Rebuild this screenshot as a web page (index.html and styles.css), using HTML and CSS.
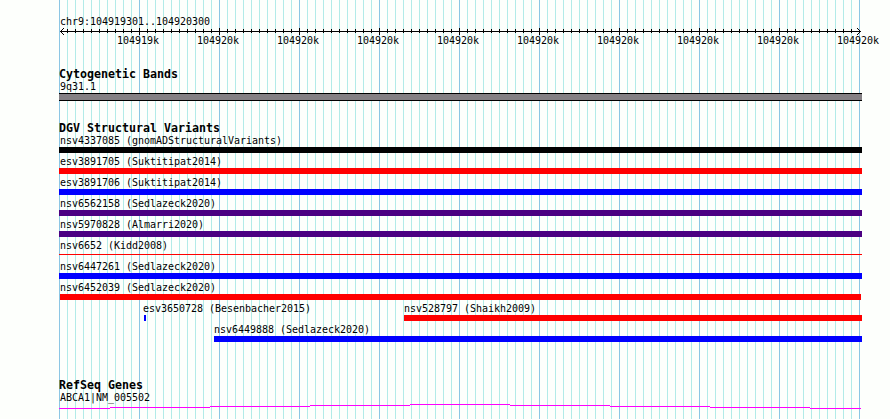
FILE: index.html
```
<!DOCTYPE html>
<html lang="en">
<head>
  <meta charset="UTF-8">
  <title>chr9:104919301..104920300</title>
  <link rel="stylesheet" href="styles.css">
</head>
<body>
  <div class="panel">
    <header class="ruler">
      <div class="region">chr9:104919301..104920300</div>
      <svg class="scale" width="803" height="9" shape-rendering="crispEdges">
        <defs>
          <pattern id="minor" width="8" height="9" patternUnits="userSpaceOnUse">
            <rect x="0" y="2" width="1" height="4"/>
          </pattern>
          <pattern id="major" width="80" height="9" patternUnits="userSpaceOnUse">
            <rect x="0" y="1" width="1" height="7"/>
          </pattern>
        </defs>
        <rect x="1" y="4" width="801" height="1"/>
        <rect x="8" y="0" width="792" height="9" fill="url(#minor)"/>
        <rect x="80" y="0" width="720" height="9" fill="url(#major)"/>
        <path d="M2 3h1v1h-1zM3 2h1v1h-1zM4 1h1v1h-1zM2 5h1v1h-1zM3 6h1v1h-1zM4 7h1v1h-1z"/>
        <path d="M800 3h1v1h-1zM799 2h1v1h-1zM798 1h1v1h-1zM800 5h1v1h-1zM799 6h1v1h-1zM798 7h1v1h-1z"/>
      </svg>
      <div class="ticks">
        <span>104919k</span><span>104920k</span><span>104920k</span><span>104920k</span><span>104920k</span><span>104920k</span><span>104920k</span><span>104920k</span><span>104920k</span><span>104920k</span>
      </div>
    </header>

    <section class="track bands">
      <h2>Cytogenetic Bands</h2>
      <div class="feature"><span>9q31.1</span><div class="band"></div></div>
    </section>

    <section class="track variants">
      <h2>DGV Structural Variants</h2>
      <div class="feature"><span>nsv4337085 (gnomADStructuralVariants)</span><div class="bar black"></div></div>
      <div class="feature"><span>esv3891705 (Suktitipat2014)</span><div class="bar red"></div></div>
      <div class="feature"><span>esv3891706 (Suktitipat2014)</span><div class="bar blue"></div></div>
      <div class="feature"><span>nsv6562158 (Sedlazeck2020)</span><div class="bar indigo"></div></div>
      <div class="feature"><span>nsv5970828 (Almarri2020)</span><div class="bar indigo"></div></div>
      <div class="feature"><span>nsv6652 (Kidd2008)</span><div class="bar thin red"></div></div>
      <div class="feature"><span>nsv6447261 (Sedlazeck2020)</span><div class="bar blue"></div></div>
      <div class="feature"><span>nsv6452039 (Sedlazeck2020)</span><div class="bar inset red"></div></div>
      <div class="row">
        <div class="feature besenbacher"><span>esv3650728 (Besenbacher2015)</span><div class="bar tiny blue"></div></div>
        <div class="feature shaikh"><span>nsv528797 (Shaikh2009)</span><div class="bar red"></div></div>
      </div>
      <div class="feature sedlazeck"><span>nsv6449888 (Sedlazeck2020)</span><div class="bar blue"></div></div>
    </section>

    <section class="track genes">
      <h2>RefSeq Genes</h2>
      <div class="feature"><span>ABCA1|NM_005502</span></div>
      <svg class="intron" width="803" height="6" shape-rendering="crispEdges">
        <path d="M0 4.5H51M51 3.5H151M151 2.5H251M251 1.5H351M351 .5H451M451 1.5H551M551 2.5H651M651 3.5H751M751 4.5H802"/>
      </svg>
    </section>
  </div>
</body>
</html>
```

FILE: styles.css
```
body {
  margin: 0;
  background: #fdfffc;
  color: #000;
  font-family: "DejaVu Sans Mono", monospace;
  font-size: 10px;
  line-height: 14px;
  letter-spacing: -0.02px;
  overflow: hidden;
}

.panel {
  box-sizing: border-box;
  width: 830px;
  height: 419px;
  margin-left: 59px;
  padding-top: 15px;
  background-image:
    repeating-linear-gradient(to right, #8cc6e4 0 1px, transparent 1px 80px),
    repeating-linear-gradient(to right, #b2ebe8 0 1px, transparent 1px 8px);
  background-size: 801px 100%;
  background-repeat: no-repeat;
}

.ruler {
  height: 51px;
}

.region {
  height: 12px;
  padding-left: 1px;
}

.scale {
  display: block;
}

.ticks {
  display: flex;
  margin: -2px 0 0 58px;
}

.ticks span {
  flex: 0 0 80px;
}

.ticks span:last-child {
  flex-basis: 42px;
}

.track {
  width: 803px;
}

h2 {
  margin: 0;
  height: 14px;
  font-size: 11.63px;
  line-height: 16px;
  letter-spacing: 0;
}

.feature {
  height: 21px;
}

.feature span {
  display: block;
  height: 13px;
  padding-left: 1px;
  white-space: pre;
}

.bands {
  height: 54px;
}

.variants {
  height: 257px;
}

.band {
  box-sizing: border-box;
  height: 8px;
  border: solid #000;
  border-width: 1px 0;
  background: #848084;
}

.bar {
  height: 6px;
}

.thin {
  height: 1px;
  margin-top: 2px;
}

.inset {
  margin: 0 1px;
}

.tiny {
  width: 2px;
  margin-left: 1px;
}

.black { background: #000; }
.red { background: #f00; }
.blue { background: #00f; }
.indigo { background: #4b0082; }

.row {
  display: flex;
}

.besenbacher {
  width: 261px;
  padding-left: 84px;
}

.shaikh {
  flex: 1;
}

.sedlazeck {
  padding-left: 155px;
}

.shaikh span,
.sedlazeck span {
  padding-left: 0;
}

.besenbacher span {
  padding-left: 0;
}

.genes .feature {
  height: 13px;
}

.intron {
  display: block;
  fill: none;
  stroke: #f0f;
}
```
